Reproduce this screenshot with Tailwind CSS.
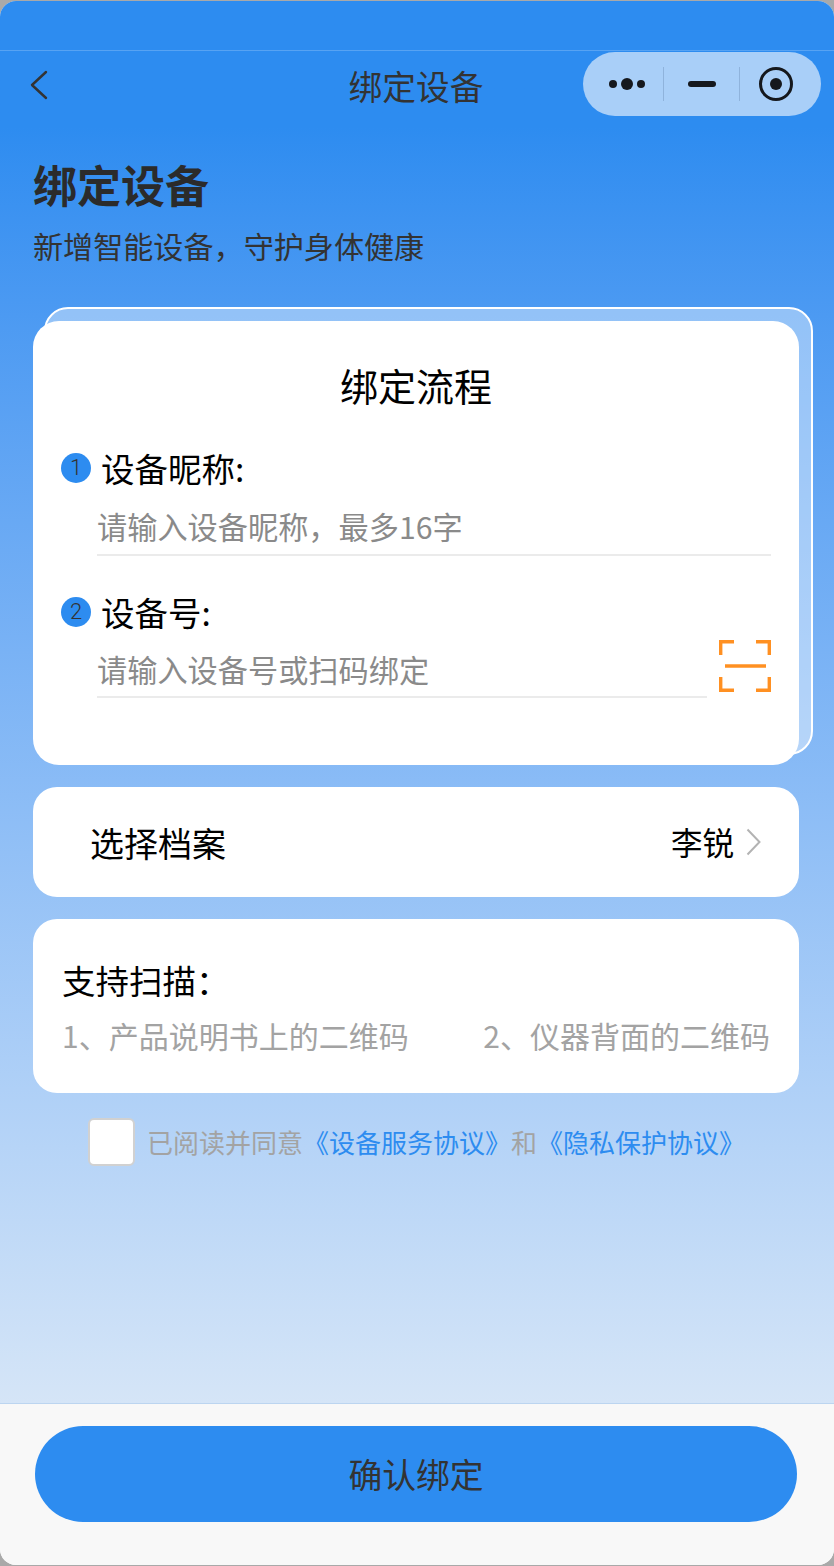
<!DOCTYPE html>
<html lang="zh-CN">
<head>
    <meta charset="UTF-8">
    <meta name="viewport" content="width=device-width, initial-scale=1.0">
    <title>绑定设备</title>
    <script src="https://cdn.jsdelivr.net/npm/@tailwindcss/browser@4"></script>
</head>
<body class="bg-[#a9a9a9] font-['Noto_Sans_CJK_SC','Noto_Sans',sans-serif]">
    <div class="w-[834px] h-[1566px] pt-[1px] overflow-hidden">
        <div class="flex flex-col h-[1564px] rounded-[16px] overflow-hidden bg-[#f8f8f8]">
            <!-- Gradient area -->
            <div class="h-[1402px] bg-gradient-to-b from-[#2d8cf0] from-[9%] to-[#d5e5f7]">
                <!-- Status bar -->
                <div class="h-[49px] border-b border-white/20 box-content"></div>

                <!-- Nav bar -->
                <div class="relative h-[70px] flex items-center justify-center">
                    <svg class="absolute left-[30px] top-[19px]" width="18" height="30" viewBox="0 0 18 30" fill="none">
                        <path d="M16 2 L2 15 L16 28" stroke="#333333" stroke-width="2.4" stroke-linecap="round" stroke-linejoin="round"/>
                    </svg>
                    <span class="text-[33.7px] leading-none text-[#333333] mr-[2px]">绑定设备</span>
                    <div class="absolute left-[583px] top-[1px] w-[238px] h-[64px] rounded-full bg-[#a9cff8] flex items-center">
                        <div class="w-[80px] flex items-center justify-center gap-[4px] pl-[7px]">
                            <span class="w-[8px] h-[8px] rounded-full bg-[#15181d]"></span>
                            <span class="w-[12px] h-[12px] rounded-full bg-[#15181d]"></span>
                            <span class="w-[8px] h-[8px] rounded-full bg-[#15181d]"></span>
                        </div>
                        <div class="w-[1px] h-[34px] bg-[#8fb3dc]"></div>
                        <div class="w-[75px] flex items-center justify-center">
                            <span class="w-[28px] h-[6px] rounded-full bg-[#15181d]"></span>
                        </div>
                        <div class="w-[1px] h-[34px] bg-[#8fb3dc]"></div>
                        <div class="flex-1 flex items-center justify-center pr-[10px]">
                            <span class="w-[34px] h-[34px] rounded-full border-[3.5px] border-[#15181d] flex items-center justify-center">
                                <span class="w-[12px] h-[12px] rounded-full bg-[#15181d]"></span>
                            </span>
                        </div>
                    </div>
                </div>

                <!-- Heading -->
                <div class="pl-[33px] pt-[35px]">
                    <h1 class="text-[44px] leading-[56px] font-bold text-[#2b2b2b]">绑定设备</h1>
                    <p class="text-[30.1px] leading-[46px] mt-[10px] text-[#333333]">新增智能设备，守护身体健康</p>
                </div>

                <!-- Steps card -->
                <div class="relative mt-[53px] mx-[33px] w-[766px]">
                    <div class="absolute left-[11px] top-[-14px] w-[769px] h-[448px] rounded-[24px] border-2 border-white bg-white/40"></div>
                    <div class="relative h-[444px] rounded-[26px] bg-white pt-[38px]">
                        <h2 class="text-center text-[38px] leading-[52px] text-black">绑定流程</h2>

                        <div class="flex items-center mt-[34px] pl-[28px]">
                            <span class="w-[30px] h-[30px] rounded-full bg-[#2d8cf0] font-['Roboto'] text-[22px] leading-none font-light text-[#333333] flex items-center justify-center">1</span>
                            <span class="ml-[10px] text-[33.5px] leading-[46px] text-black">设备昵称:</span>
                        </div>
                        <div class="ml-[64px] mr-[28px] mt-[10px] h-[55px] border-b-2 border-[#ebebeb] text-[30.2px] leading-[50px] text-[#8a8a8a]">请输入设备昵称，最多16字</div>

                        <div class="flex items-center mt-[33px] pl-[28px]">
                            <span class="w-[30px] h-[30px] rounded-full bg-[#2d8cf0] font-['Roboto'] text-[22px] leading-none font-light text-[#333333] flex items-center justify-center">2</span>
                            <span class="ml-[10px] text-[33.5px] leading-[46px] text-black">设备号:</span>
                        </div>
                        <div class="flex items-end ml-[64px] mr-[28px] mt-[5px]">
                            <div class="w-[610px] h-[54px] border-b-2 border-[#ebebeb] text-[30.2px] leading-[50px] text-[#8a8a8a]">请输入设备号或扫码绑定</div>
                            <svg class="ml-[12px] mb-[6px]" width="52" height="52" viewBox="0 0 52 52" fill="none" stroke="#ff9022" stroke-width="3.4">
                                <path d="M1.7 15 V1.7 H15 M37 1.7 H50.3 V15 M1.7 37 V50.3 H15 M37 50.3 H50.3 V37"/>
                                <path d="M6 26 H47"/>
                            </svg>
                        </div>
                    </div>
                </div>

                <!-- Profile row -->
                <div class="mt-[22px] mx-[33px] w-[766px] h-[110px] rounded-[24px] bg-white flex items-center justify-between pl-[57px] pr-[38px]">
                    <span class="text-[34px] text-black">选择档案</span>
                    <div class="flex items-center">
                        <span class="text-[31.5px] text-black">李锐</span>
                        <svg class="ml-[12px]" width="15" height="28" viewBox="0 0 15 28" fill="none">
                            <path d="M1.5 1.5 L13.5 14 L1.5 26.5" stroke="#b3b3b3" stroke-width="2"/>
                        </svg>
                    </div>
                </div>

                <!-- Supported scan targets -->
                <div class="mt-[22px] mx-[33px] w-[766px] h-[174px] rounded-[24px] bg-white pt-[37px] px-[29px]">
                    <div class="text-[33.5px] leading-[48px] text-black">支持扫描：</div>
                    <div class="flex justify-between mt-[10px] text-[30px] leading-[42px] whitespace-nowrap text-[#a3a3a3]">
                        <span>1、产品说明书上的二维码</span>
                        <span>2、仪器背面的二维码</span>
                    </div>
                </div>

                <!-- Agreement -->
                <div class="flex items-center mt-[25px] ml-[88px]">
                    <span class="w-[47px] h-[48px] rounded-[6px] border-2 border-[#d1d1d1] bg-white"></span>
                    <p class="ml-[12px] text-[26px] leading-[48px] whitespace-nowrap text-[#a3a3a3]">已阅读并同意<span class="text-[#2d8cf0]">《设备服务协议》</span>和<span class="text-[#2d8cf0]">《隐私保护协议》</span></p>
                </div>
            </div>

            <!-- Footer -->
            <div class="flex-1 border-t border-[#bcd5f0] bg-[#f8f8f8] pt-[22px] px-[35px]">
                <button class="w-[762px] h-[96px] rounded-full bg-[#2d8cf0] text-[33.8px] text-[#333333]">确认绑定</button>
            </div>
        </div>
    </div>
</body>
</html>
